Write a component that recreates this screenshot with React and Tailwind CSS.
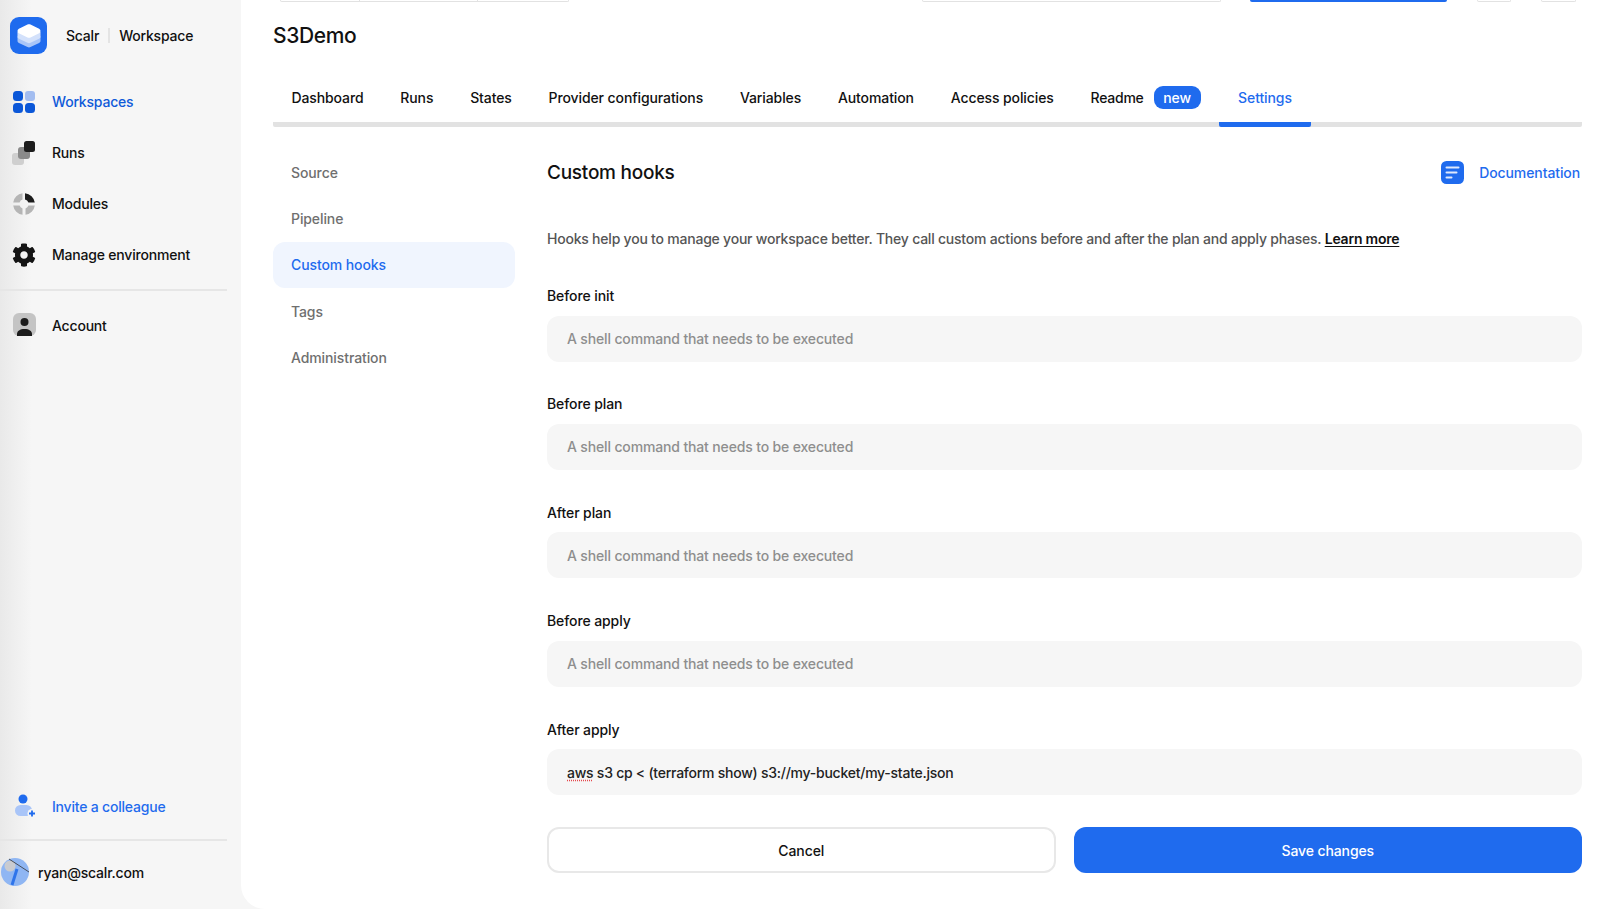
import { FaCog } from 'react-icons/fa'

const tabs = ['Dashboard', 'Runs', 'States', 'Provider configurations', 'Variables', 'Automation', 'Access policies']
const subNav = ['Source', 'Pipeline', 'Custom hooks', 'Tags', 'Administration']
const hooks = ['Before init', 'Before plan', 'After plan', 'Before apply']

const LogoIcon = () => (
  <div className="w-[37px] h-[37px] rounded-[9px] bg-[#1f6bee] flex items-center justify-center">
    <svg width="26" height="26" viewBox="0 0 26 26">
      <path d="M1.5 13.5 13 8l11.5 5.5v4.2c0 1-.5 1.7-1.4 2.2L14.5 24c-1 .5-2 .5-3 0l-8.600-4.100c-.9-.5-1.400-1.200-1.400-2.200z" fill="#a9c5f8" />
      <path d="M1.500 9 13 4l11.500 5v4.500c0 1-.5 1.700-1.400 2.200L14.500 19.800c-1 .5-2 .5-3 0L2.900 15.700c-.9-.5-1.400-1.200-1.400-2.200z" fill="#d3e1fb" />
      <path d="M11.500 1.600c1-.5 2-.5 3 0l8.600 4.200c1.900.9 1.900 3.500 0 4.400l-8.600 4.200c-1 .5-2 .5-3 0L2.900 10.200c-1.900-.9-1.900-3.500 0-4.400z" fill="#fff" />
    </svg>
  </div>
)

const WorkspacesIcon = () => (
  <svg width="22" height="22" viewBox="0 0 22 22">
    <rect x="0" y="0" width="10" height="10" rx="3.500" fill="#0b57d8" />
    <rect x="12" y="0" width="10" height="10" rx="3" fill="#a3bdf0" />
    <rect x="0" y="12" width="10" height="10" rx="3.500" fill="#0b57d8" />
    <rect x="12" y="12" width="10" height="10" rx="3.500" fill="#0b57d8" />
  </svg>
)

const RunsIcon = () => (
  <svg width="24" height="24" viewBox="0 0 24 24">
    <rect x="0" y="12" width="12" height="12" rx="3" fill="#cfcfcf" />
    <rect x="6" y="6" width="12" height="12" rx="3" fill="#8a8a8a" />
    <rect x="12" y="0" width="11" height="11" rx="2.500" fill="#1c1c1c" />
  </svg>
)

const ModulesIcon = () => (
  <svg width="22" height="22" viewBox="0 0 22 22">
    <path d="M9.500 0.200v6.400a4.600 4.600 0 0 0-2.900 2.900H0.200A10.800 10.800 0 0 1 9.500 0.200z" fill="#b5b5b5" />
    <path d="M12 0.200A10.800 10.800 0 0 1 21.800 9.500h-6.400A4.600 4.600 0 0 0 12 6.600z" fill="#1c1c1c" />
    <path d="M0.200 12.500h6.400a4.600 4.600 0 0 0 2.900 2.900v6.400A10.800 10.800 0 0 1 0.200 12.500z" fill="#b5b5b5" />
    <path d="M21.800 12.500A10.800 10.800 0 0 1 12.500 21.800v-6.400a4.600 4.600 0 0 0 2.900-2.900z" fill="#b5b5b5" />
  </svg>
)

const AccountIcon = () => (
  <svg width="24" height="24" viewBox="0 0 24 24">
    <rect width="23" height="23" rx="6" fill="#c4c4c4" />
    <circle cx="11.500" cy="9" r="4" fill="#1c1c1c" />
    <path d="M4 23v-2c0-3 3-5 7.500-5s7.500 2 7.500 5v2z" fill="#1c1c1c" />
  </svg>
)

const InviteIcon = () => (
  <svg width="24" height="24" viewBox="0 0 24 24">
    <circle cx="10" cy="5" r="4.500" fill="#1f6bee" />
    <rect x="2" y="11" width="17" height="11" rx="5.500" fill="#a9c5f8" />
    <circle cx="19" cy="19.500" r="4.500" fill="#f6f6f6" />
    <path d="M19 16.500v6M16 19.500h6" stroke="#1f6bee" strokeWidth="1.800" />
  </svg>
)

const Avatar = () => (
  <svg width="28" height="28" viewBox="0 0 28 28">
    <circle cx="14" cy="14" r="14" fill="#8fb6f3" />
    <path d="M16 11 11 27" stroke="#2e74ea" strokeWidth="3" />
    <circle cx="9" cy="8" r="5.500" fill="#c9cbd0" />
    <path d="M8 1 28 14" stroke="#333" strokeWidth="0.800" />
  </svg>
)

const DocIcon = () => (
  <svg width="23" height="23" viewBox="0 0 23 23">
    <rect width="23" height="23" rx="5.500" fill="#1f6bee" />
    <path d="M5.500 6.500h12M5.500 11.500h10M5.500 16.500h5" stroke="#dfe9fc" strokeWidth="2" strokeLinecap="round" />
  </svg>
)

const navRow = 'flex items-center h-[51px]'

function Sidebar() {
  return (
    <aside className="w-[241px] shrink-0 h-full flex flex-col text-[14px] font-medium tracking-[-0.2px] text-[#111] bg-[linear-gradient(90deg,#e9e9e9_0,#f6f6f6_32px)]">
      <div className="flex items-center pl-[10px] pt-[17px] h-[37px] box-content">
        <LogoIcon />
        <span className="ml-[19px]">Scalr</span>
        <span className="mx-[9px] w-[2px] h-[15px] bg-[#e4e4e4]" />
        <span>Workspace</span>
      </div>
      <nav className="mt-[22px]">
        <a className={`${navRow} text-[#0f5ad9]`}>
          <span className="w-[52px] pl-[13px]"><WorkspacesIcon /></span>Workspaces
        </a>
        <a className={navRow}>
          <span className="w-[52px] pl-[12px]"><RunsIcon /></span>Runs
        </a>
        <a className={navRow}>
          <span className="w-[52px] pl-[13px]"><ModulesIcon /></span>Modules
        </a>
        <a className={navRow}>
          <FaCog className="ml-[12px] mr-[16px] w-[24px] h-[24px] text-[#141414]" />Manage environment
        </a>
      </nav>
      <div className="mt-[9px] h-[2px] w-[227px] bg-[#e6e6e6]" />
      <a className="flex items-center h-[68px]">
        <span className="w-[52px] pl-[13px]"><AccountIcon /></span>Account
      </a>
      <div className="flex-1" />
      <a className="flex items-center h-[36px] -mt-[1px] mb-[1px] text-[#1f6bee]">
        <span className="w-[52px] pl-[13px]"><InviteIcon /></span>Invite a colleague
      </a>
      <div className="mt-[14px] h-[2px] w-[227px] bg-[#e6e6e6]" />
      <div className="flex items-center h-[68px] pb-[6px] pl-[1px]">
        <Avatar />
        <span className="ml-[9px]">ryan@scalr.com</span>
      </div>
    </aside>
  )
}

function TopFragments() {
  const ctl = 'h-[2px] border-b border-x border-[#e2e2e2] rounded-b-[3px]'
  return (
    <div className="flex h-[2px] ml-[7px] w-[1296px]">
      <div className={`${ctl} w-[289px] flex`}>
        <span className="w-[79px] border-r border-[#e2e2e2]" />
        <span className="w-[118px] border-r border-[#e2e2e2]" />
      </div>
      <div className={`${ctl} ml-[353px] w-[299px]`} />
      <div className="ml-[29px] w-[197px] h-[2px] bg-[#1f6bee] rounded-b-[3px]" />
      <div className={`${ctl} ml-[30px] w-[34px]`} />
      <div className={`${ctl} ml-[30px] w-[35px]`} />
    </div>
  )
}

function Tabs() {
  return (
    <div className="mt-[27px] h-[50px] flex items-start border-b-[5px] border-[#e2e2e2] rounded-b-[2px] text-[14px] font-medium tracking-[-0.1px] text-[#111]">
      {tabs.map((t) => (
        <a key={t} className="px-[18.400px] h-[45px] flex items-center pb-[4px]">{t}</a>
      ))}
      <a className="pl-[18.400px] pr-[18.400px] h-[45px] flex items-center pb-[4px]">
        <span className="tracking-[-0.25px]">Readme</span>
        <span className="ml-[10px] h-[23px] w-[47px] rounded-[9px] bg-[#1f6bee] text-white flex items-center justify-center">new</span>
      </a>
      <a className="w-[92px] h-[50px] flex items-center justify-center pb-[4px] text-[#1f6bee] border-b-[5px] border-[#1f6bee] rounded-b-[2px]">Settings</a>
    </div>
  )
}

function SubNav() {
  return (
    <div className="w-[242px] shrink-0 text-[14px] font-medium tracking-[-0.1px] text-[#6f6f6f]">
      {subNav.map((s) => (
        <a
          key={s}
          className={`h-[46.300px] flex items-center pl-[18px] rounded-[12px] ${
            s === 'Custom hooks' ? 'bg-[#f0f5fe] text-[#1f6bee]' : ''
          }`}
        >
          {s}
        </a>
      ))}
    </div>
  )
}

const fieldClass = 'w-full h-[46px] rounded-[12px] bg-[#f6f6f6] px-[20px] text-[14px] font-medium outline-none'

function HookField({ label }) {
  return (
    <div className="h-[108.400px]">
      <label className="block h-[19px] text-[14px] font-medium tracking-[-0.1px] text-[#111] leading-[19px]">{label}</label>
      <input className={`${fieldClass} mt-[10.500px] tracking-[-0.15px] placeholder:text-[#8e8e8e]`} placeholder="A shell command that needs to be executed" readOnly />
    </div>
  )
}

function HooksForm() {
  return (
    <section className="flex-1 min-w-0 pl-[32px]">
      <div className="flex items-center justify-between h-[46px]">
        <h2 className="pt-[2px] text-[19px] tracking-[-0.25px] font-medium text-[#111]">Custom hooks</h2>
        <a className="flex items-center pr-[2px] text-[14px] font-medium tracking-[-0.1px] text-[#1f6bee]">
          <DocIcon />
          <span className="ml-[15px]">Documentation</span>
        </a>
      </div>
      <p className="mt-[34px] h-[19px] leading-[19px] text-[14px] font-medium tracking-[-0.22px] text-[#555] whitespace-nowrap">
        Hooks help you to manage your workspace better. They call custom actions before and after the plan and apply phases.{' '}
        <a className="font-semibold text-[#111] underline underline-offset-2">Learn more</a>
      </p>
      <div className="mt-[38px]">
        {hooks.map((h) => (
          <HookField key={h} label={h} />
        ))}
        <label className="block h-[19px] text-[14px] font-medium tracking-[-0.1px] text-[#111] leading-[19px]">After apply</label>
        <div className={`${fieldClass} mt-[10.500px] flex items-center tracking-[-0.25px] text-[#222] whitespace-pre`}>
          <span className="underline decoration-dotted decoration-[#e5484d] underline-offset-2">aws</span>
          <span> s3 cp {'<'} (terraform show) s3://my-bucket/my-state.json</span>
        </div>
      </div>
      <div className="mt-[32px] grid grid-cols-2 gap-[18px] text-[14px] font-medium tracking-[-0.1px]">
        <button className="h-[46px] rounded-[12px] border-2 border-[#e8e8e8] bg-white text-[#111]">Cancel</button>
        <button className="h-[46px] rounded-[12px] bg-[#1f6bee] text-white">Save changes</button>
      </div>
    </section>
  )
}

export default function App() {
  return (
    <div className="w-[1600px] h-[909px] overflow-hidden flex bg-[#f6f6f6] font-['Inter','Liberation_Sans',sans-serif]">
      <Sidebar />
      <main className="flex-1 min-w-0 h-full bg-white rounded-bl-[24px]">
        <div className="pr-[18px]">
          <div className="ml-[32px]">
            <TopFragments />
            <h1 className="mt-[20px] h-[28px] leading-[28px] text-[21px] tracking-[-0.35px] font-medium text-[#111]">S3Demo</h1>
            <Tabs />
            <div className="flex mt-[22px]">
              <SubNav />
              <HooksForm />
            </div>
          </div>
        </div>
      </main>
    </div>
  )
}
